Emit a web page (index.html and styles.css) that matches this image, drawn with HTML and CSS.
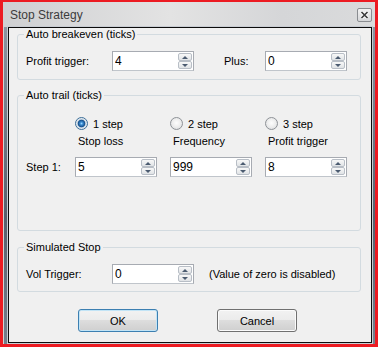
FILE: index.html
```html
<!DOCTYPE html>
<html lang="en">
<head>
    <meta charset="UTF-8">
    <meta name="viewport" content="width=device-width, initial-scale=1.0">
    <title>Stop Strategy</title>
    <link rel="stylesheet" href="styles.css">
</head>
<body>
    <div class="window">
        <div class="titlebar">
            <span class="title">Stop Strategy</span>
            <button class="close-btn" aria-label="Close">
                <svg width="9" height="8" viewBox="0 0 9 8">
                    <path d="M1.5 1 L7.5 7 M7.5 1 L1.5 7" stroke="#ffffff" stroke-width="3.4" fill="none"/>
                    <path d="M1.5 1 L7.5 7 M7.5 1 L1.5 7" stroke="#3d3d3d" stroke-width="1.7" fill="none"/>
                </svg>
            </button>
        </div>

        <div class="frame">
            <div class="client">
                <fieldset class="group">
                    <legend>Auto breakeven (ticks)</legend>
                    <div class="breakeven-row">
                        <label>Profit trigger:</label>
                        <div class="spin">
                            <input type="text" value="4">
                            <span class="spin-btns"><span class="spin-up"></span><span class="spin-down"></span></span>
                        </div>
                        <div class="spacer"></div>
                        <label>Plus:</label>
                        <div class="spin">
                            <input type="text" value="0">
                            <span class="spin-btns"><span class="spin-up"></span><span class="spin-down"></span></span>
                        </div>
                    </div>
                </fieldset>

                <fieldset class="group group-trail">
                    <legend>Auto trail (ticks)</legend>
                    <div class="trail-grid">
                        <label class="radio-opt col-start"><span class="radio checked"></span>1 step</label>
                        <label class="radio-opt"><span class="radio"></span>2 step</label>
                        <label class="radio-opt"><span class="radio"></span>3 step</label>

                        <span class="sub-label col-start">Stop loss</span>
                        <span class="sub-label">Frequency</span>
                        <span class="sub-label">Profit trigger</span>

                        <label class="step-row">Step 1:</label>
                        <div class="spin step-row">
                            <input type="text" value="5">
                            <span class="spin-btns"><span class="spin-up"></span><span class="spin-down"></span></span>
                        </div>
                        <div class="spin step-row">
                            <input type="text" value="999">
                            <span class="spin-btns"><span class="spin-up"></span><span class="spin-down"></span></span>
                        </div>
                        <div class="spin step-row">
                            <input type="text" value="8">
                            <span class="spin-btns"><span class="spin-up"></span><span class="spin-down"></span></span>
                        </div>
                    </div>
                </fieldset>

                <fieldset class="group group-sim">
                    <legend>Simulated Stop</legend>
                    <div class="sim-row">
                        <label>Vol Trigger:</label>
                        <div class="spin">
                            <input type="text" value="0">
                            <span class="spin-btns"><span class="spin-up"></span><span class="spin-down"></span></span>
                        </div>
                        <span class="hint">(Value of zero is disabled)</span>
                    </div>
                </fieldset>

                <div class="buttons">
                    <button class="btn btn-default">OK</button>
                    <button class="btn">Cancel</button>
                </div>
            </div>
        </div>
    </div>
</body>
</html>
```

FILE: styles.css
```css
* {
    margin: 0;
    padding: 0;
    box-sizing: border-box;
}

body {
    background: #ec1b22;
    font-family: 'Liberation Sans', Arial, sans-serif;
    font-size: 11px;
    color: #000;
}

.window {
    width: 372px;
    height: 342px;
    margin: 2px 3px 3px;
    display: flex;
    flex-direction: column;
    border-left: 1px solid #d2d2d2;
    background: linear-gradient(to right, #cfd0d2 0%, #e3e3e3 45%, #d5d6d8 75%, #dadbdc 100%);
}

/* title bar */
.titlebar {
    height: 25px;
    display: flex;
    align-items: center;
    justify-content: space-between;
    padding: 0 3px 0 6px;
}

.title {
    font-size: 12px;
    color: #3c3c3c;
}

.close-btn {
    width: 15px;
    height: 14px;
    display: flex;
    align-items: center;
    justify-content: center;
    border: 1px solid #8a8d91;
    border-radius: 2px;
    background: linear-gradient(#f2f2f2, #d6d7d9);
}

/* window frame + client area */
.frame {
    flex: 1;
    display: flex;
    padding: 0 3px 1px 4px;
    background: linear-gradient(to bottom, #8b95a1 0%, #56606d 60%, #75808d 100%);
}

.client {
    flex: 1;
    display: flex;
    flex-direction: column;
    background: #f0f0f0;
    border: 1px solid #0c0c0c;
    box-shadow: 0 0 0 1px #c8ccd2;
    padding: 0 10px 0 8px;
}

/* group boxes */
.group {
    min-width: 0;
    border: 1px solid #d3dbe0;
    border-radius: 3px;
    padding: 10px 8px 8px;
}

.group legend {
    line-height: 13px;
    padding: 0 2px;
    margin-left: -2px;
}

.group-trail {
    margin-top: 9px;
    padding-top: 14px;
    padding-bottom: 53px;
}

.group-sim {
    margin-top: 10px;
    padding-bottom: 7px;
}

.breakeven-row {
    display: grid;
    grid-template-columns: 86px 82px 30px 41px 82px;
    align-items: center;
}

/* spin boxes */
.spin {
    display: flex;
    height: 20px;
    background: #fff;
    border: 1px solid #a7abb2;
    border-bottom-color: #c0c5cb;
}

.spin input {
    flex: 1;
    min-width: 0;
    border: none;
    outline: none;
    background: transparent;
    font: inherit;
    font-size: 12px;
    color: #000;
    padding-left: 2px;
}

.spin-btns {
    width: 15px;
    display: flex;
    flex-direction: column;
    padding: 1px 1px 1px 0;
}

.spin-btns span {
    flex: 1;
    display: flex;
    align-items: center;
    justify-content: center;
    border: 1px solid #b8bec6;
    border-radius: 2px;
    background: linear-gradient(#f8f8f8, #e0e3e6);
}

.spin-up::after {
    content: "";
    border-left: 3px solid transparent;
    border-right: 3px solid transparent;
    border-bottom: 3px solid #4b5b70;
}

.spin-down::after {
    content: "";
    border-left: 3px solid transparent;
    border-right: 3px solid transparent;
    border-top: 3px solid #4b5b70;
}

/* auto trail */
.trail-grid {
    display: grid;
    grid-template-columns: 36px repeat(3, 82px);
    column-gap: 13px;
    row-gap: 3px;
    align-items: center;
}

.col-start {
    grid-column: 2;
}

.radio-opt {
    display: flex;
    align-items: center;
    gap: 5px;
    height: 15px;
}

.radio {
    width: 13px;
    height: 13px;
    flex-shrink: 0;
    border-radius: 50%;
    border: 1px solid #8e9297;
    background: radial-gradient(circle at 50% 45%, #fdfdfd 0%, #efefef 45%, #d6d8da 100%);
}

.radio.checked {
    border-color: #3c6e98;
    background: radial-gradient(circle, #9ad8ff 0, #3a8ad0 1.5px, #164f8a 3.4px, #c9d6e2 4.2px, #eef2f5 5.5px);
}

.sub-label {
    line-height: 15px;
    padding-left: 3px;
}

.step-row {
    margin-top: 5px;
}

/* simulated stop */
.sim-row {
    display: grid;
    grid-template-columns: 86px 82px auto;
    align-items: center;
}

.hint {
    padding-left: 15px;
}

/* dialog buttons */
.buttons {
    display: flex;
    justify-content: center;
    gap: 59px;
    margin-top: 17px;
    padding-right: 3px;
}

.btn {
    width: 80px;
    height: 23px;
    font: inherit;
    color: #000;
    border: 1px solid #707070;
    border-radius: 3px;
    background: linear-gradient(#f2f2f2 0%, #ebebeb 49%, #dddddd 50%, #cfcfcf 100%);
    box-shadow: inset 0 0 0 1px #fbfbfb;
}

.btn-default {
    border-color: #3c7fb1;
    box-shadow: inset 0 0 0 1px #c2e4f6;
}
```
